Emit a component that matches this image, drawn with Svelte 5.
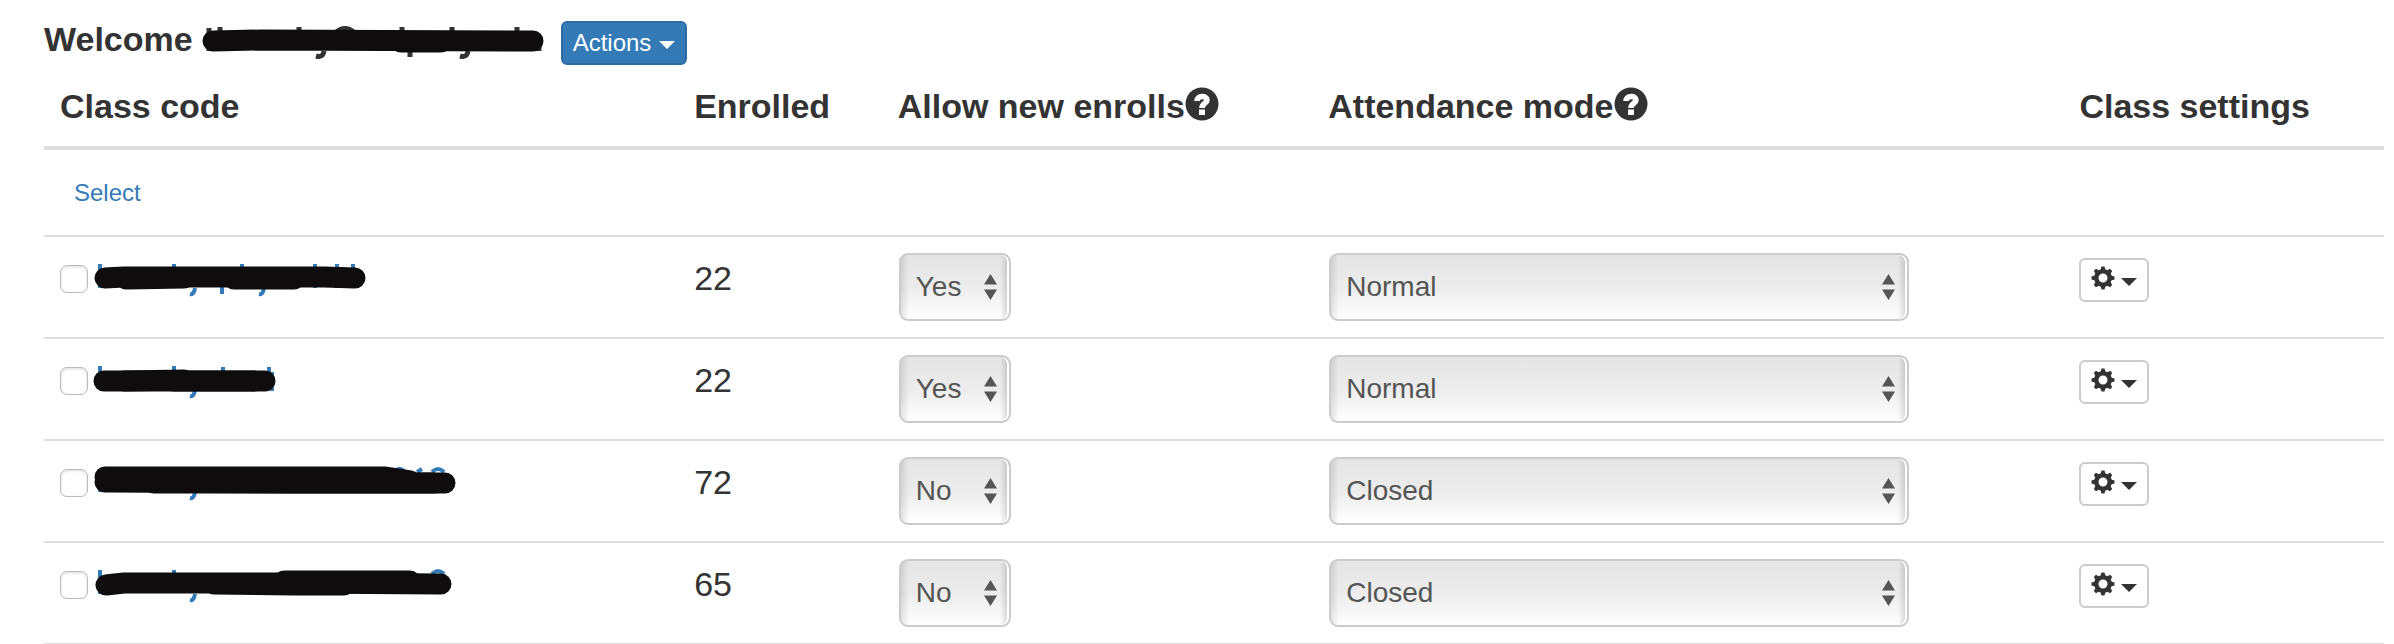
<script>
	const classes = [
		{
			enrolled: 22,
			allow: 'Yes',
			mode: 'Normal',
			width: 272,
			ink: 'M11 14 L30 13 H230 L261 14',
			shade: 'M32 15 L90 14 M140 15 H200',
			ticks: 'M6 0 V24 M80 0 V8 M148 0 V8 M128 18 V30 M221 0 V24 M243 0 V24 M259 0 V24 M101 24 Q100 31 96 30 M170 24 Q169 31 165 30'
		},
		{
			enrolled: 22,
			allow: 'Yes',
			mode: 'Normal',
			width: 182,
			ink: 'M10 15 H171',
			shade: 'M30 15 L90 14 M80 15 H160',
			ticks: 'M6 0 V24 M80 0 V8 M129 1 V8 M175 1 V8 M175 8 H180 M176 23 H180 M101 24 Q100 31 96 30'
		},
		{
			enrolled: 72,
			allow: 'No',
			mode: 'Closed',
			width: 363,
			ink: 'M11 14 L200 15 L351 15',
			shade: 'M11 9 H290 L316 13 M60 15 H340',
			ticks: 'M6 4 V24 M101 24 Q100 31 96 30 M302 2 Q308 -1 312 6 M323 4 L328 1 M338 4 Q344 -2 350 4'
		},
		{
			enrolled: 65,
			allow: 'No',
			mode: 'Closed',
			width: 358,
			ink: 'M12 15 L30 13 H200 L347 14',
			shade: 'M120 14 L200 15 H250 M190 11 H316',
			ticks: 'M6 0 V24 M80 0 V8 M101 24 Q100 31 96 30 M338 4 Q344 -2 350 4'
		}
	];
</script>

{#snippet help()}
	<svg class="help" viewBox="0 0 34 34" aria-hidden="true">
		<circle cx="17" cy="17" r="16.5" fill="#333" />
		<path d="M12 14 C12 8.5 22 8 22 13 C22 16.5 17 16 17 21" fill="none" stroke="#fff" stroke-width="5.6" />
		<rect x="14" y="22.5" width="6" height="5.5" fill="#fff" />
	</svg>
{/snippet}

{#snippet picker(options, value, labelId)}
	<div class="picker">
		<select {value} aria-labelledby={labelId}>
			{#each options as option}
				<option value={option}>{option}</option>
			{/each}
		</select>
		<svg class="arrows" viewBox="0 0 13 26" aria-hidden="true">
			<path d="M0 10.5 L6.5 0 L13 10.5 Z M0 15.5 H13 L6.5 26 Z" fill="#555" />
		</svg>
	</div>
{/snippet}

<div class="page">
	<header class="header">
		<h1>Welcome</h1>
		<svg class="ink user" viewBox="0 0 344 32" aria-hidden="true">
			<path class="ticks dark" d="M8 1 V24 M19 0 V8 M98 0 V8 M201 0 V8 M251 0 V8 M316 0 V8 M209 20 V30 M123 24 Q122 31 115 29 M267 24 Q266 31 259 29 M134 6 Q144 -3 154 6 M338 16 V24" />
			<path class="stroke" d="M12 14 L60 13 L332 14" />
			<path class="stroke" d="M200 15 H240" />
		</svg>
		<button class="btn btn-primary" type="button">
			Actions <span class="caret"></span>
		</button>
	</header>

	<table>
		<thead>
			<tr>
				<th class="col-code">Class code</th>
				<th class="col-enrolled">Enrolled</th>
				<th class="col-allow"><span id="allow">Allow new enrolls</span>{@render help()}</th>
				<th class="col-mode"><span id="mode">Attendance mode</span>{@render help()}</th>
				<th id="settings">Class settings</th>
			</tr>
		</thead>
		<tbody>
			<tr>
				<td colspan="5"><a class="select-link" href="#select">Select</a></td>
			</tr>
			{#each classes as item, i}
				<tr>
					<td>
						<label class="code" for="class-{i}">
							<input type="checkbox" id="class-{i}" />
							<svg class="ink" width={item.width} height="32" aria-hidden="true">
								<path class="ticks" d={item.ticks} />
								<path class="stroke" d={item.ink} />
								<path class="stroke" d={item.shade} />
							</svg>
						</label>
					</td>
					<td>{item.enrolled}</td>
					<td>{@render picker(['Yes', 'No'], item.allow, 'allow')}</td>
					<td class="mode">{@render picker(['Normal', 'Closed'], item.mode, 'mode')}</td>
					<td>
						<div class="settings">
							<button class="btn btn-default" type="button" aria-labelledby="settings">
								<svg class="gear" viewBox="-12 -12 24 24" aria-hidden="true">
									<circle r="6.7" fill="none" stroke="#333" stroke-width="4.4" />
									{#each [0, 45, 90, 135, 180, 225, 270, 315] as angle}
										<path d="M-2.8 -7 L-1.5 -11.5 H1.5 L2.8 -7 Z" fill="#333" transform="rotate({angle})" />
									{/each}
								</svg>
								<span class="caret"></span>
							</button>
						</div>
					</td>
				</tr>
			{/each}
		</tbody>
	</table>
</div>

<style>
	:global(body) {
		margin: 0;
		background: #fff;
	}

	.page {
		padding: 17px 10px 0 44px;
		font-family: "Liberation Sans", Arial, sans-serif;
		font-size: 34px;
		line-height: 50px;
		color: #333;
	}

	.header {
		display: flex;
		align-items: baseline;
		height: 49px;
	}

	h1 {
		margin: 0;
		font-size: 34px;
		line-height: 44px;
		font-weight: bold;
	}

	.ink {
		display: block;
		flex: none;
		height: 32px;
		overflow: visible;
	}

	.user {
		width: 344px;
		align-self: flex-start;
		margin: 10px 16px 0 8px;
	}

	.stroke {
		fill: none;
		stroke: #0e0c0d;
		stroke-width: 21px;
		stroke-linecap: round;
		stroke-linejoin: round;
	}

	.ticks {
		fill: none;
		stroke: #337ab7;
		stroke-width: 4px;
	}

	.dark {
		stroke: #333;
		stroke-width: 5px;
	}

	.btn {
		display: flex;
		align-items: center;
		gap: 8px;
		box-sizing: border-box;
		height: 44px;
		padding: 0 10px;
		border: 2px solid #ccc;
		border-radius: 6px;
		background: #fff;
		font: 24px/36px "Liberation Sans", Arial, sans-serif;
		color: #333;
		cursor: pointer;
	}

	.btn-primary {
		background: #337ab7;
		border-color: #2e6da4;
		color: #fff;
	}

	.caret {
		width: 0;
		border-top: 8px solid;
		border-left: 8px solid transparent;
		border-right: 8px solid transparent;
		margin-top: 4px;
	}

	table {
		width: 100%;
		table-layout: fixed;
		border-collapse: separate;
		border-spacing: 0;
	}

	th,
	td {
		box-sizing: border-box;
		padding: 16px;
	}

	th {
		border-bottom: 4px solid #ddd;
		text-align: left;
		line-height: 48px;
		white-space: nowrap;
	}

	td {
		border-bottom: 2px solid #ddd;
		vertical-align: top;
	}

	.col-code {
		width: 27.1%;
	}

	.col-enrolled {
		width: 8.7%;
	}

	.col-allow {
		width: 18.4%;
	}

	.col-mode {
		width: 32.1%;
	}

	.help {
		width: 34px;
		height: 34px;
		vertical-align: -3px;
	}

	.select-link {
		display: block;
		padding: 0 14px;
		font-size: 24px;
		line-height: 53px;
		color: #337ab7;
		text-decoration: none;
	}

	.code {
		display: flex;
		align-items: center;
		gap: 6px;
		height: 52px;
	}

	.code .ink {
		margin-top: 2px;
	}

	input {
		appearance: none;
		flex: none;
		width: 28px;
		height: 28px;
		margin: 0;
		border: 1px solid #bbb;
		border-radius: 7px;
		background: #fff;
		box-shadow: inset 0 1px 3px rgba(0, 0, 0, 0.15);
	}

	.picker {
		position: relative;
		width: 112px;
		margin-left: 1px;
	}

	.mode .picker {
		width: auto;
		max-width: 580px;
	}

	select {
		appearance: none;
		display: block;
		box-sizing: border-box;
		width: 100%;
		height: 68px;
		padding: 0 15px;
		border: 2px solid #ccc;
		border-radius: 9px;
		background:
			linear-gradient(to right, rgba(0, 0, 0, 0.1), transparent 8px),
			linear-gradient(to left, rgba(0, 0, 0, 0.13) 2px, transparent 9px),
			linear-gradient(#e5e5e5, #ececec 50%, #fff);
		box-shadow: inset -2px 0 0 #fff;
		font: 28px/40px "Liberation Sans", Arial, sans-serif;
		color: #555;
	}

	.arrows {
		position: absolute;
		top: 21px;
		right: 14px;
		width: 13px;
		height: 26px;
		pointer-events: none;
	}

	.settings {
		display: flex;
		align-items: center;
		height: 54px;
	}

	.btn-default {
		width: 70px;
		gap: 6px;
	}

	.gear {
		flex: none;
		width: 24px;
		height: 24px;
		margin-bottom: 4px;
	}
</style>
